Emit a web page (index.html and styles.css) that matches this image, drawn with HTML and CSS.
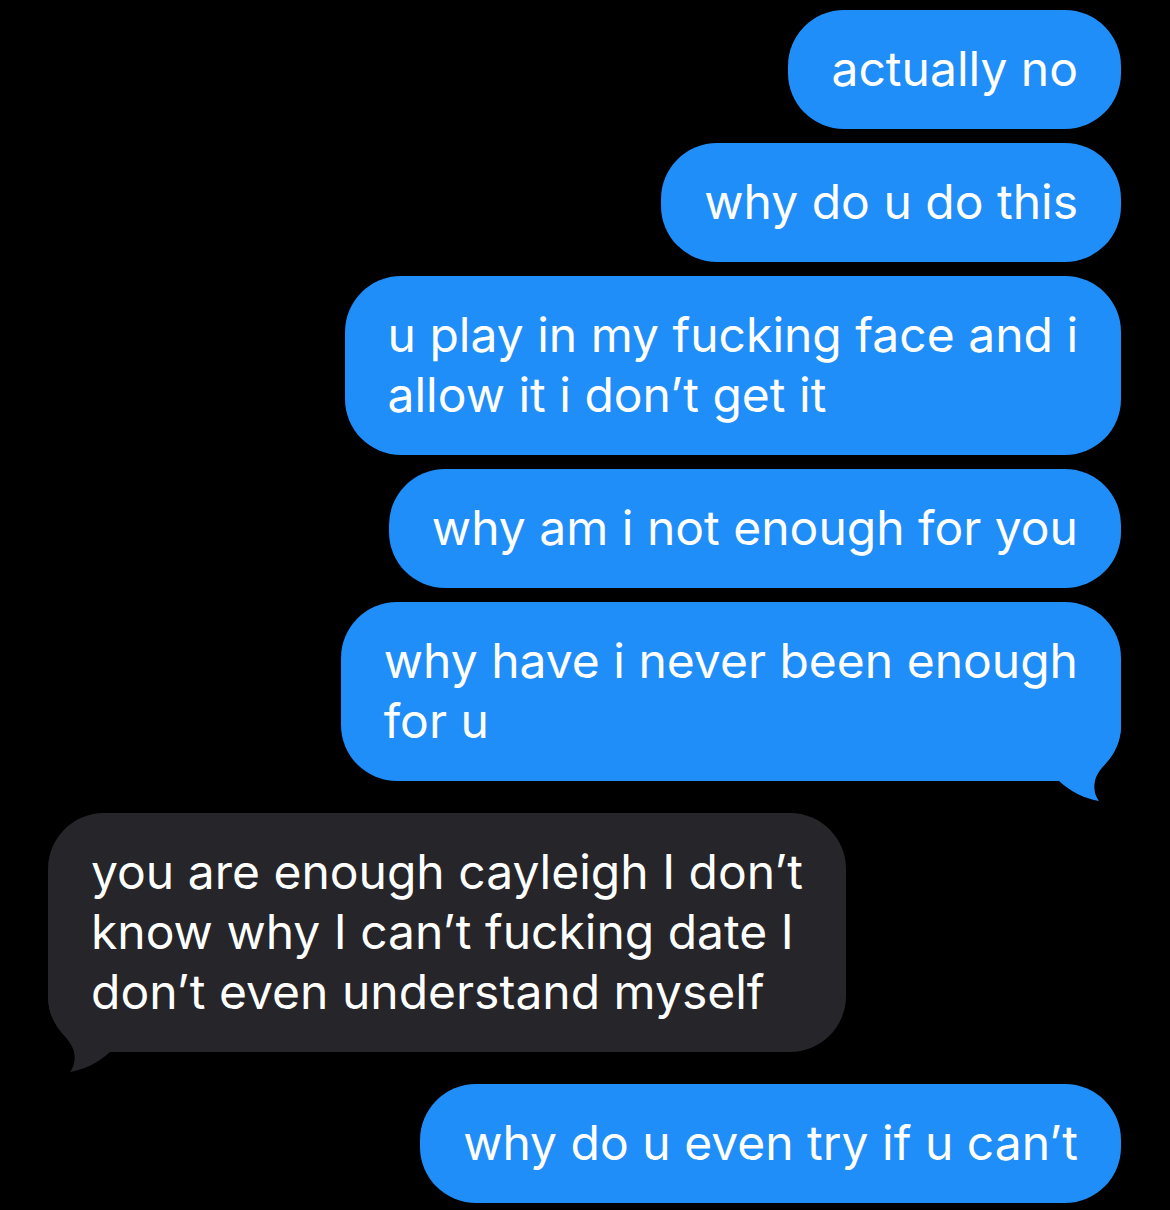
FILE: index.html
```html
<!DOCTYPE html>
<html lang="en">
<head>
    <meta charset="UTF-8">
    <title>Messages</title>
    <link rel="stylesheet" href="styles.css">
</head>
<body>
    <div class="thread">
        <div class="bubble sent">actually no</div>
        <div class="bubble sent">why do u do this</div>
        <div class="bubble sent">u play in my fucking face and i<br>allow it i don’t get it</div>
        <div class="bubble sent">why am i not enough for you</div>
        <div class="bubble sent tail">why have i never been enough<br>for u
            <svg class="tail-shape" viewBox="0 0 70 76" width="70" height="76"><path d="M70 0 C70 32 47 40 44 56 C42 65 45 72 48 76 C35 74 20 67 8 56 L0 56 L0 0 Z"/></svg>
        </div>
        <div class="bubble received tail">you are enough cayleigh I don’t<br>know why I can’t fucking date I<br>don’t even understand myself
            <svg class="tail-shape" viewBox="0 0 70 76" width="70" height="76"><path d="M70 0 C70 32 47 40 44 56 C42 65 45 72 48 76 C35 74 20 67 8 56 L0 56 L0 0 Z"/></svg>
        </div>
        <div class="bubble sent">why do u even try if u can’t</div>
    </div>
</body>
</html>
```
FILE: styles.css
```css
* {
    box-sizing: border-box;
    margin: 0;
    padding: 0;
}

body {
    background: #000;
    font-family: 'Inter', 'Noto Sans', sans-serif;
    width: 1170px;
    height: 1210px;
    overflow: hidden;
}

.thread {
    display: flex;
    flex-direction: column;
    gap: 14px;
    padding: 10px 49px 0 48px;
}

.bubble {
    position: relative;
    z-index: 0;
    font-size: 48px;
    line-height: 60px;
    color: #fff;
    padding: 29px 43px 30px;
    border-radius: 56px;
    max-width: 820px;
}

.sent {
    align-self: flex-end;
    background: #1f8ef8;
}

.received {
    align-self: flex-start;
    background: #262529;
}

.tail {
    margin-bottom: 18px;
}

/* tail sits under the text but over the bubble fill */
.tail-shape {
    position: absolute;
    z-index: -1;
    bottom: -20px;
    right: 0;
}

.sent .tail-shape path {
    fill: #1f8ef8;
}

.received .tail-shape {
    right: auto;
    left: 0;
    transform: scaleX(-1);
}

.received .tail-shape path {
    fill: #262529;
}
```
